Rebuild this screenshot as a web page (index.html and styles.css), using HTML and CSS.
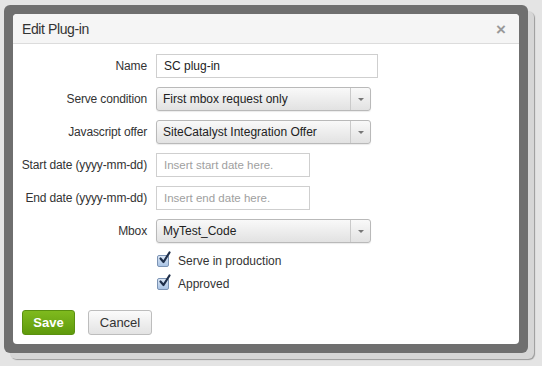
FILE: index.html
```html
<!DOCTYPE html>
<html lang="en">
<head>
  <meta charset="UTF-8" />
  <title>Edit Plug-in</title>
  <link rel="stylesheet" href="styles.css">
</head>
<body>

  <div class="frame">
    <div class="dialog">
      <div class="dialog-header">
        <span class="dialog-title">Edit Plug-in</span>
        <span class="close">&times;</span>
      </div>

      <div class="dialog-body">
        <label class="field-label">Name</label>
        <div class="text-input name-input">SC plug-in</div>

        <label class="field-label">Serve condition</label>
        <div class="select">
          <span class="select-value">First mbox request only</span>
          <span class="select-arrow"></span>
        </div>

        <label class="field-label">Javascript offer</label>
        <div class="select">
          <span class="select-value">SiteCatalyst Integration Offer</span>
          <span class="select-arrow"></span>
        </div>

        <label class="field-label">Start date (yyyy-mm-dd)</label>
        <div class="text-input date-input placeholder">Insert start date here.</div>

        <label class="field-label">End date (yyyy-mm-dd)</label>
        <div class="text-input date-input placeholder">Insert end date here.</div>

        <label class="field-label">Mbox</label>
        <div class="select">
          <span class="select-value">MyTest_Code</span>
          <span class="select-arrow"></span>
        </div>

        <div class="checks">
          <div class="check-row">
            <span class="checkbox">
              <svg width="13" height="14" viewBox="0 0 13 14">
                <path d="M2.5 7.5 L5.5 11 L11.5 1.5" fill="none" stroke="#1f2f4a" stroke-width="2.2" stroke-linecap="round" stroke-linejoin="round"/>
              </svg>
            </span>
            Serve in production
          </div>
          <div class="check-row">
            <span class="checkbox">
              <svg width="13" height="14" viewBox="0 0 13 14">
                <path d="M2.5 7.5 L5.5 11 L11.5 1.5" fill="none" stroke="#1f2f4a" stroke-width="2.2" stroke-linecap="round" stroke-linejoin="round"/>
              </svg>
            </span>
            Approved
          </div>
        </div>
      </div>

      <div class="dialog-footer">
        <button class="btn btn-save">Save</button>
        <button class="btn btn-cancel">Cancel</button>
      </div>
    </div>
  </div>

</body>
</html>
```

FILE: styles.css
```css
* {
  box-sizing: border-box;
  margin: 0;
  padding: 0;
}

body {
  font-family: 'Liberation Sans', Arial, sans-serif;
  background: #e4e4e4;
  color: #333;
  width: 542px;
  height: 366px;
  overflow: hidden;
}

/* dark modal frame with the screenshot shadow */
.frame {
  margin: 5px 0 0 4px;
  width: 524px;
  height: 348px;
  padding: 9px;
  background: #6f6f6f;
  border-radius: 6px;
  box-shadow: 6px 6px 0 #d6d6d6, 7px 7px 1px #9a9a9a;
}

.dialog {
  background: #fff;
  border-radius: 4px;
  height: 100%;
  display: flex;
  flex-direction: column;
  overflow: hidden;
}

.dialog-header {
  height: 30px;
  background: #f5f5f5;
  border-bottom: 1px solid #dcdcdc;
  display: flex;
  align-items: center;
  justify-content: space-between;
  padding: 0 13px 0 9px;
}

.dialog-title {
  font-size: 14px;
  letter-spacing: -0.4px;
  color: #333;
}

.close {
  font-size: 17px;
  font-weight: 700;
  color: #999;
  line-height: 1;
  margin-top: 2px;
}

.dialog-body {
  display: grid;
  grid-template-columns: 125px auto;
  column-gap: 9px;
  row-gap: 9px;
  align-items: center;
  justify-items: start;
  padding: 10px 9px 0;
}

.field-label {
  justify-self: end;
  font-size: 12px;
  letter-spacing: -0.15px;
  color: #333;
  white-space: nowrap;
}

.text-input {
  height: 24px;
  border: 1px solid #cfcfcf;
  background: #fff;
  font-size: 12px;
  color: #222;
  padding: 0 7px;
  display: flex;
  align-items: center;
}

.name-input {
  width: 222px;
}

.date-input {
  width: 154px;
  font-size: 11.5px;
}

.placeholder {
  color: #a0a0a0;
}

.select {
  width: 215px;
  height: 24px;
  border: 1px solid #b9b9b9;
  border-radius: 3px;
  background: linear-gradient(#f9f9f9, #e2e2e2);
  box-shadow: 0 1px 1px rgba(0,0,0,0.08);
  display: flex;
  align-items: center;
  font-size: 12px;
  color: #222;
}

.select-value {
  flex: 1;
  padding-left: 6px;
  white-space: nowrap;
}

.select-arrow {
  width: 20px;
  height: 100%;
  border-left: 1px solid #cacaca;
  position: relative;
}

.select-arrow::after {
  content: "";
  position: absolute;
  left: 7px;
  top: 10px;
  border-left: 3px solid transparent;
  border-right: 3px solid transparent;
  border-top: 3px solid #777;
}

.checks {
  grid-column: 2;
  margin-top: -3px;
  display: flex;
  flex-direction: column;
}

.check-row {
  height: 23px;
  display: flex;
  align-items: center;
  font-size: 12px;
  color: #333;
}

.checkbox {
  width: 12px;
  height: 12px;
  margin: 0 9px 0 1px;
  border: 1px solid #7b93b4;
  border-radius: 2px;
  background: linear-gradient(#dbe7f6, #a9c3e4);
  position: relative;
}

.checkbox svg {
  position: absolute;
  left: 0;
  top: -5px;
}

.dialog-footer {
  margin-top: auto;
  padding: 0 9px 9px;
  display: flex;
  gap: 13px;
}

.btn {
  height: 25px;
  font-family: 'Liberation Sans', Arial, sans-serif;
  font-size: 13px;
  border-radius: 3px;
  cursor: pointer;
}

.btn-save {
  width: 53px;
  color: #fff;
  font-weight: 700;
  background: linear-gradient(#7fba1e, #5f9a0c);
  border: 1px solid #5a9010;
}

.btn-cancel {
  width: 64px;
  color: #333;
  background: linear-gradient(#fbfbfb, #e3e3e3);
  border: 1px solid #bdbdbd;
}
```
